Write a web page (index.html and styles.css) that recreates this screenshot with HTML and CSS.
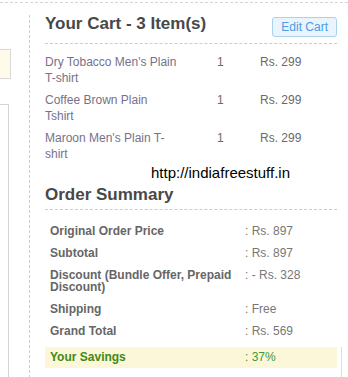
FILE: index.html
```html
<!DOCTYPE html>
<html lang="en">
<head>
  <meta charset="UTF-8">
  <meta name="viewport" content="width=device-width, initial-scale=1.0">
  <title>Your Cart</title>
  <link rel="stylesheet" href="styles.css">
</head>
<body>
  <div class="page">
    <!-- left column (cut off) -->
    <div class="sidebar">
      <div class="promo"></div>
      <div class="panel"></div>
    </div>

    <!-- cart -->
    <div class="cart">
      <div class="cart-header">
        <h2>Your Cart - 3 Item(s)</h2>
        <a class="edit-btn" href="#">Edit Cart</a>
      </div>

      <div class="items">
        <div class="item">
          <div class="item-name">Dry Tobacco Men's Plain T-shirt</div>
          <div class="item-qty">1</div>
          <div class="item-price">Rs. 299</div>
        </div>
        <div class="item">
          <div class="item-name">Coffee Brown Plain Tshirt</div>
          <div class="item-qty">1</div>
          <div class="item-price">Rs. 299</div>
        </div>
        <div class="item">
          <div class="item-name">Maroon Men's Plain T-shirt</div>
          <div class="item-qty">1</div>
          <div class="item-price">Rs. 299</div>
        </div>
      </div>

      <h2 class="summary-title">Order Summary</h2>

      <div class="summary">
        <div class="sum-row">
          <div class="sum-label">Original Order Price</div>
          <div class="sum-value">: Rs. 897</div>
        </div>
        <div class="sum-row">
          <div class="sum-label">Subtotal</div>
          <div class="sum-value">: Rs. 897</div>
        </div>
        <div class="sum-row">
          <div class="sum-label">Discount (Bundle Offer, Prepaid Discount)</div>
          <div class="sum-value">: - Rs. 328</div>
        </div>
        <div class="sum-row">
          <div class="sum-label">Shipping</div>
          <div class="sum-value">: Free</div>
        </div>
        <div class="sum-row">
          <div class="sum-label">Grand Total</div>
          <div class="sum-value">: Rs. 569</div>
        </div>
        <div class="sum-row savings">
          <div class="sum-label">Your Savings</div>
          <div class="sum-value">: 37%</div>
        </div>
      </div>
    </div>

    <div class="aside"></div>

    <!-- watermark -->
    <div class="watermark">http://indiafreestuff.in</div>
  </div>
</body>
</html>
```

FILE: styles.css
```css
body {
  font-family: "Liberation Sans", Arial, sans-serif;
  margin: 0;
  padding: 0;
  background-color: #fff;
  color: #666;
  font-size: 12px;
}
.page {
  position: relative;
  display: flex;
  margin-top: 2px;
  height: 375px;
  border-top: 1px dashed #d4d4d4;
  overflow: hidden;
}
.sidebar {
  width: 29px;
  flex: 0 0 29px;
  margin-top: 12px;
  border-right: 1px dashed #ccc;
  display: flex;
  flex-direction: column;
}
.promo {
  width: 11px;
  height: 30px;
  margin-top: 34px;
  box-sizing: border-box;
  background-color: #fffbea;
  border: 1px solid #d8d8d8;
  border-left: none;
}
.panel {
  flex: 1;
  width: 9px;
  margin-top: 25px;
  box-sizing: border-box;
  border-top: 1px solid #d4d4d4;
  border-right: 1px solid #d4d4d4;
}
.cart {
  width: 292px;
  flex: 0 0 292px;
  padding: 11px 0 0 15px;
}
.cart h2 {
  margin: 0;
  font-size: 17px;
  line-height: 20px;
  font-weight: bold;
  color: #484848;
}
.cart-header {
  display: flex;
  justify-content: space-between;
  align-items: flex-start;
  padding-bottom: 6px;
  border-bottom: 1px dashed #ccc;
}
.edit-btn {
  margin-top: 3px;
  padding: 0 8px;
  height: 18px;
  line-height: 18px;
  border: 1px solid #a9d2ef;
  border-radius: 3px;
  background-color: #eaf4fd;
  color: #4c9be6;
  text-decoration: none;
  font-size: 12px;
}
.items {
  margin-top: 7px;
}
.item {
  display: grid;
  grid-template-columns: 172px 43px 1fr;
  padding: 3px 0;
  line-height: 16px;
  color: #77718a;
}
.item-name {
  padding-right: 39px;
}
.item-qty,
.item-price {
  color: #6a6a6a;
}
.summary-title {
  margin-top: 20px !important;
  padding-bottom: 4px;
  border-bottom: 1px dashed #ccc;
}
.summary {
  margin-top: 10px;
}
.sum-row {
  display: grid;
  grid-template-columns: 195px 1fr;
  padding: 5px 5px;
  line-height: 12px;
}
.sum-label {
  font-weight: bold;
  color: #666;
  padding-right: 5px;
}
.sum-value {
  color: #777;
}
.savings {
  margin-top: 5px;
  padding: 4px 5px 5px;
  background-color: #fdf7d9;
}
.savings .sum-label {
  color: #3f8a12;
}
.savings .sum-value {
  color: #3c9a3a;
}
.aside {
  margin: 344px 0 0 4px;
  flex: 1;
  border-left: 1px solid #ddd;
}
.watermark {
  position: absolute;
  top: 161px;
  left: 145px;
  padding: 0 6px;
  background-color: #fff;
  color: #000;
  font-size: 15px;
  line-height: 18px;
}
```
